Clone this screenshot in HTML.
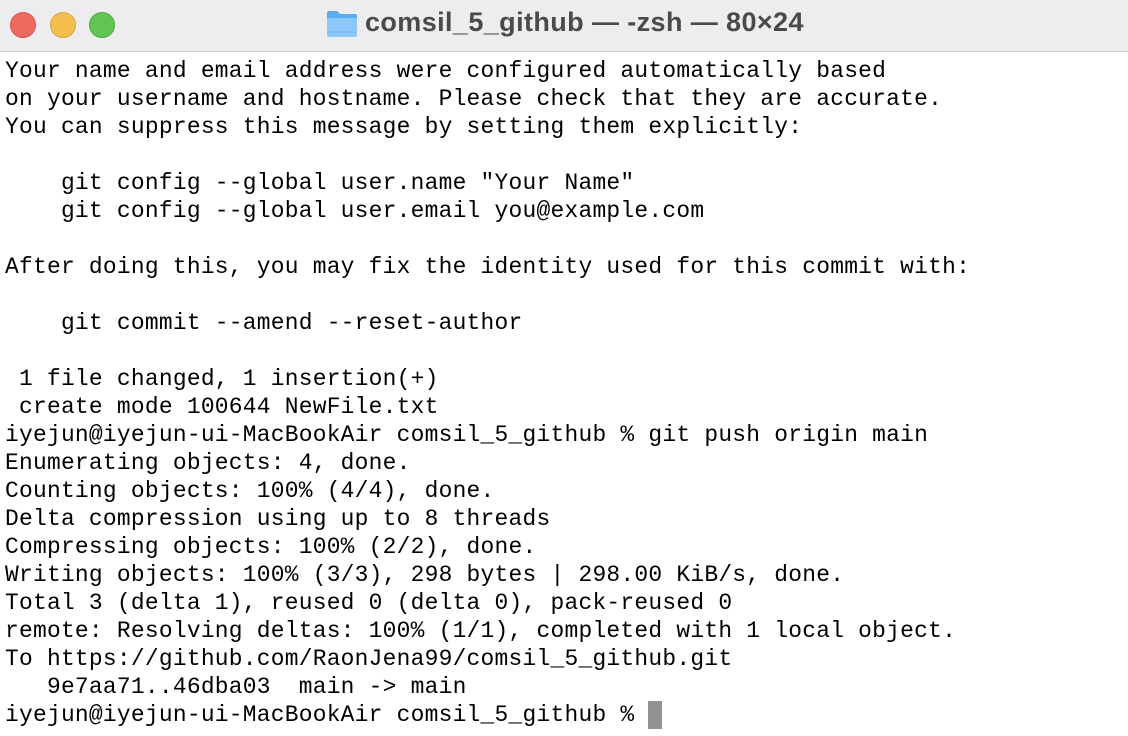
<!DOCTYPE html>
<html><head><meta charset="utf-8"><style>
html,body{margin:0;padding:0;width:1128px;height:736px;overflow:hidden;background:#fff}
.bar{position:absolute;left:0;top:0;width:1128px;height:51px;background:#ededf0;border-bottom:1px solid #d6d6d8}
.dot{position:absolute;top:12px;width:24px;height:24px;border-radius:50%}
.title{position:absolute;left:365px;top:7px;font:bold 27px "Liberation Sans",sans-serif;color:#4a4a4d;white-space:nowrap;letter-spacing:0.4px}
pre{position:absolute;left:5px;top:57px;margin:0;font:22.9px/28px "Liberation Mono",monospace;letter-spacing:0.25px;color:#000}
.cur{display:inline-block;width:14px;height:28px;background:#929292;vertical-align:top}
</style></head><body>
<div class="bar">
<div class="dot" style="left:10px;background:#ee6a5f;border:0.5px solid #d5574c"></div>
<div class="dot" style="left:50px;background:#f5bf4f;border:0.5px solid #d9a53c"></div>
<div class="dot" style="left:89px;background:#61c554;border:0.5px solid #4fa843"></div>
<svg style="position:absolute;left:326px;top:10px" width="32" height="28" viewBox="0 0 32 28">
<path d="M1 3 Q1 1 3 1 H11 L14 4 H29 Q31 4 31 6 V25 Q31 27 29 27 H3 Q1 27 1 25Z" fill="#5aaef0"/>
<path d="M1 8 H31 V25 Q31 27 29 27 H3 Q1 27 1 25Z" fill="#8cc8f7"/>
<line x1="2" y1="22" x2="30" y2="22" stroke="#6fb5ee" stroke-width="1"/>
</svg>
<div class="title">comsil_5_github — -zsh — 80×24</div>
</div>
<pre>Your name and email address were configured automatically based
on your username and hostname. Please check that they are accurate.
You can suppress this message by setting them explicitly:

    git config --global user.name "Your Name"
    git config --global user.email you@example.com

After doing this, you may fix the identity used for this commit with:

    git commit --amend --reset-author

 1 file changed, 1 insertion(+)
 create mode 100644 NewFile.txt
iyejun@iyejun-ui-MacBookAir comsil_5_github % git push origin main
Enumerating objects: 4, done.
Counting objects: 100% (4/4), done.
Delta compression using up to 8 threads
Compressing objects: 100% (2/2), done.
Writing objects: 100% (3/3), 298 bytes | 298.00 KiB/s, done.
Total 3 (delta 1), reused 0 (delta 0), pack-reused 0
remote: Resolving deltas: 100% (1/1), completed with 1 local object.
To https://github.com/RaonJena99/comsil_5_github.git
   9e7aa71..46dba03  main -&gt; main
iyejun@iyejun-ui-MacBookAir comsil_5_github % <span class="cur"></span></pre>
</body></html>
